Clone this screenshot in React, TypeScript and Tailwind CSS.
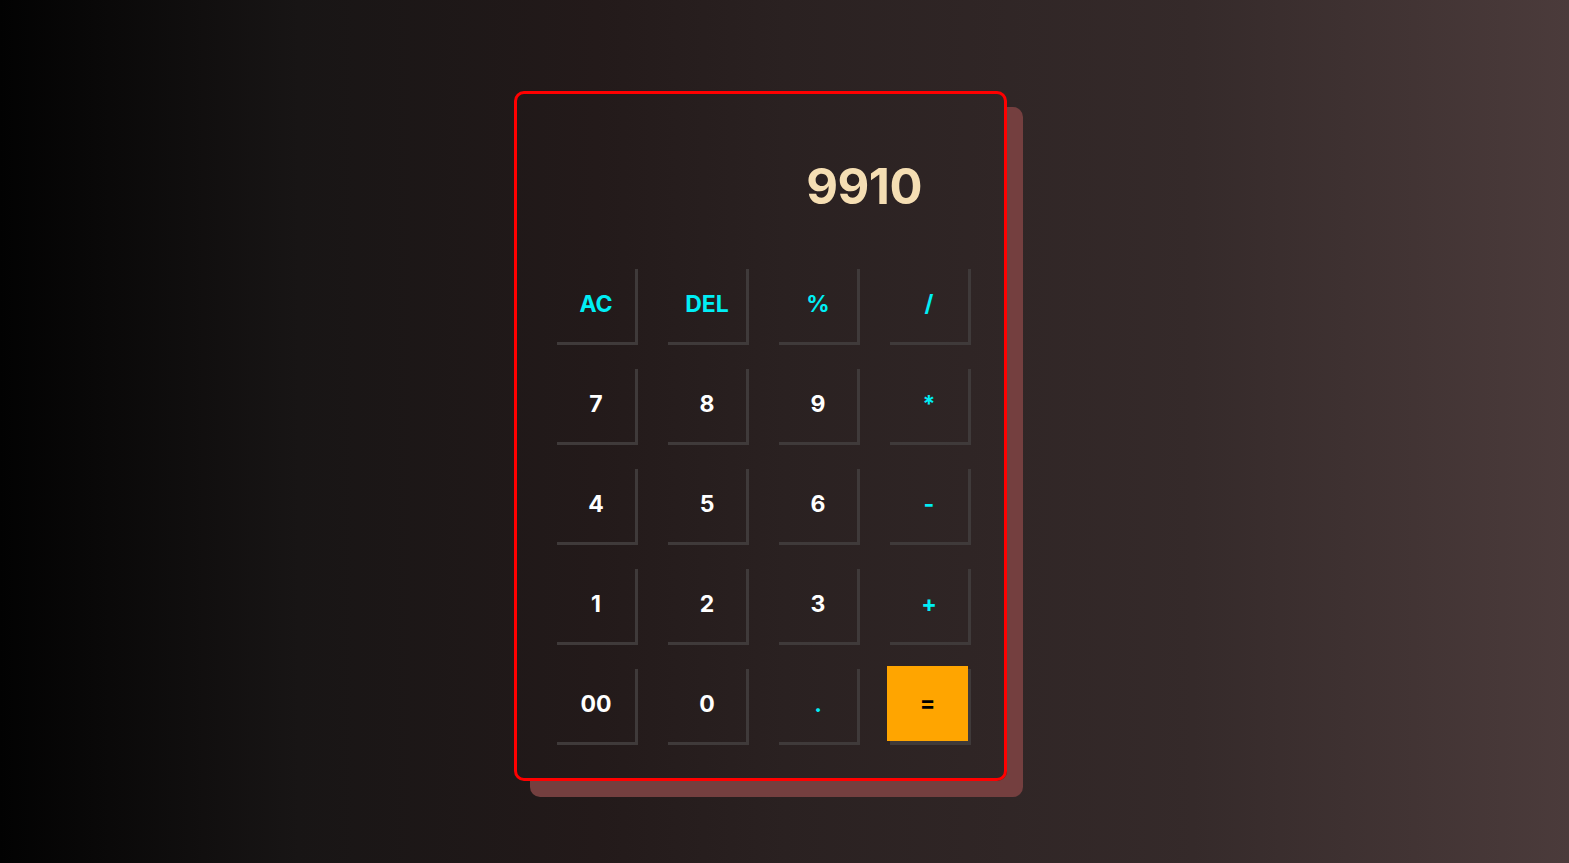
import { useState } from "react";

const keys: { label: string; kind: "op" | "num" | "eq" }[] = [
  { label: "AC", kind: "op" },
  { label: "DEL", kind: "op" },
  { label: "%", kind: "op" },
  { label: "/", kind: "op" },
  { label: "7", kind: "num" },
  { label: "8", kind: "num" },
  { label: "9", kind: "num" },
  { label: "*", kind: "op" },
  { label: "4", kind: "num" },
  { label: "5", kind: "num" },
  { label: "6", kind: "num" },
  { label: "-", kind: "op" },
  { label: "1", kind: "num" },
  { label: "2", kind: "num" },
  { label: "3", kind: "num" },
  { label: "+", kind: "op" },
  { label: "00", kind: "num" },
  { label: "0", kind: "num" },
  { label: ".", kind: "op" },
  { label: "=", kind: "eq" },
];

export default function App() {
  const [value] = useState("9910");

  return (
    <div
      className="min-h-screen w-full flex justify-center items-start pt-[91px] pr-[48px] bg-[linear-gradient(to_right,#020202,#181515_19%,#231a1a_38%,#2a2121_50%,#352a2a_76%,#4b3b3b)]"
      style={{ fontFamily: "Inter, 'Noto Sans', sans-serif" }}
    >
      {/* calculator */}
      <div className="w-[493px] h-[690px] border-[3px] border-[#ff0000] rounded-[10px] shadow-[16px_16px_0_#743f3f] flex flex-col">
        {/* display */}
        <div className="h-[175px] flex items-center justify-end pr-[82px] pt-[10px]">
          <span className="text-[49px] font-bold text-[#f5deb3] tracking-[-0.5px]">
            {value}
          </span>
        </div>

        {/* keys */}
        <div className="grid grid-cols-[repeat(4,81px)] gap-x-[30px] gap-y-[24px] pl-[40px]">
          {keys.map((k) =>
            k.kind === "eq" ? (
              <div key={k.label} className="w-[81px] h-[76px] bg-[#3f3a3a]">
                <button className="w-[81px] h-[75px] -translate-x-[3px] -translate-y-[3px] bg-[#ffa500] text-black text-[23px] font-bold flex items-center justify-center">
                  {k.label}
                </button>
              </div>
            ) : (
              <button
                key={k.label}
                className={
                  "w-[81px] h-[76px] border-r-[3px] border-b-[3px] border-[#3f3a3a] flex items-center justify-center pb-[2px] text-[23px] font-bold " +
                  (k.kind === "op" ? "text-[#00eef5]" : "text-white")
                }
              >
                {k.label}
              </button>
            )
          )}
        </div>
      </div>
    </div>
  );
}
